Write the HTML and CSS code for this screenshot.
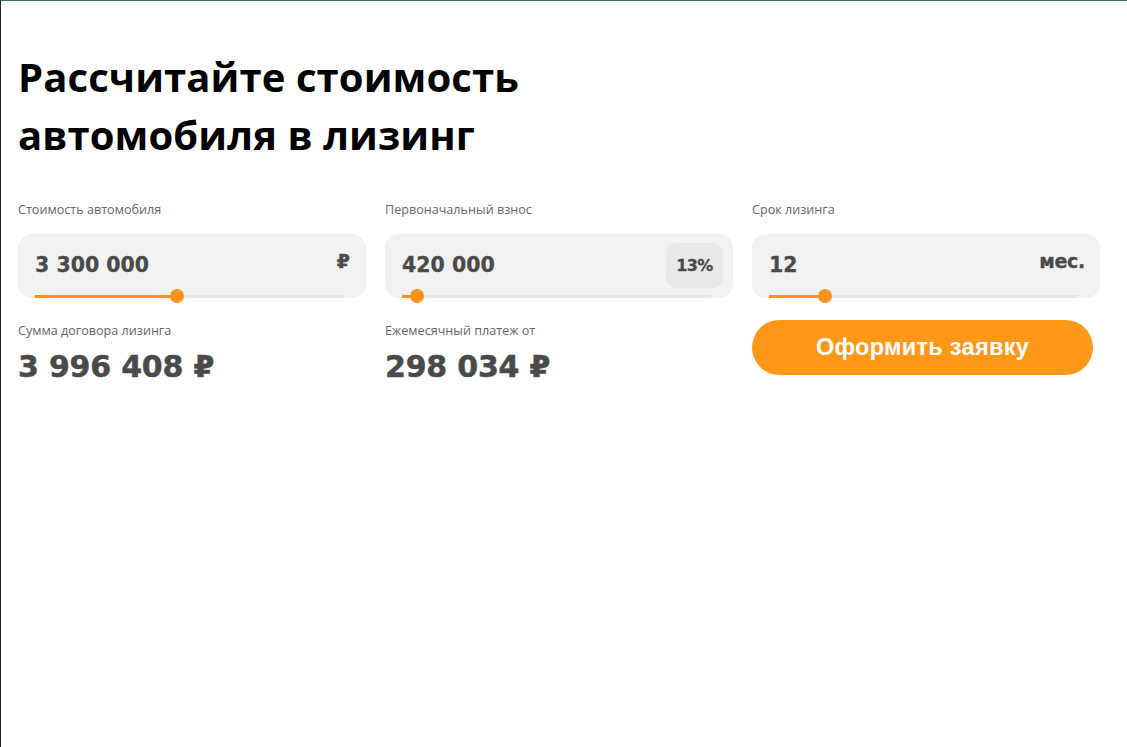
FILE: index.html
```html
<!DOCTYPE html>
<html lang="ru">
<head>
<meta charset="utf-8">
<title>Лизинг</title>
<link rel="stylesheet" href="styles.css">
</head>
<body>
<main class="calc">
  <h1 class="title">Рассчитайте стоимость<br>автомобиля в лизинг</h1>
  <div class="grid">
    <div class="field">
      <div class="label">Стоимость автомобиля</div>
      <div class="box">
        <span class="value">3 300 000</span>
        <span class="unit">₽</span>
        <div class="track"><div class="fill" style="width:46%"></div></div>
      </div>
    </div>
    <div class="field">
      <div class="label">Первоначальный взнос</div>
      <div class="box">
        <span class="value">420 000</span>
        <span class="badge">13%</span>
        <div class="track"><div class="fill" style="width:5%"></div></div>
      </div>
    </div>
    <div class="field">
      <div class="label">Срок лизинга</div>
      <div class="box">
        <span class="value">12</span>
        <span class="unit unit-text">мес.</span>
        <div class="track"><div class="fill" style="width:18%"></div></div>
      </div>
    </div>
    <div class="result">
      <div class="label">Сумма договора лизинга</div>
      <div class="big">3 996 408 ₽</div>
    </div>
    <div class="result">
      <div class="label">Ежемесячный платеж от</div>
      <div class="big">298 034 ₽</div>
    </div>
    <div class="action">
      <button class="btn" type="button">Оформить заявку</button>
    </div>
  </div>
</main>
</body>
</html>
```
FILE: styles.css
```css
html { background: #fff; }
body {
  margin: 0;
  min-height: 746px;
  border-top: 1px solid #3b6a6a;
  border-left: 1px solid #2a2030;
  font-family: "Open Sans", "Noto Sans", sans-serif;
  color: #4a4a4a;
}
.calc {
  padding: 47px 0 0 17px;
  width: 1082px;
}
.title {
  margin: 0 0 37px;
  font-family: "Open Sans", sans-serif;
  font-weight: 700;
  font-size: 40px;
  line-height: 58px;
  color: #000;
  letter-spacing: 0.1px;
}
.grid {
  display: grid;
  grid-template-columns: repeat(3, 348px);
  column-gap: 19px;
}
.label {
  font-size: 12.6px;
  color: #666;
  line-height: 18px;
}
.field .label { margin-bottom: 15px; }
.box {
  position: relative;
  height: 62px;
  background: #f2f2f2;
  border-radius: 14px;
  display: flex;
  align-items: center;
  justify-content: space-between;
  padding: 0 16px 2px 17px;
}
.value, .unit, .badge, .big {
  font-family: "DejaVu Sans", Verdana, sans-serif;
  font-weight: 700;
  color: #4a4a4a;
  -webkit-text-stroke: 0.3px #4a4a4a;
}
.value {
  font-size: 20.5px;
}
.unit {
  font-size: 19px;
  margin-top: -8px;
}
.unit-text { font-size: 19px; margin-right: -1px; letter-spacing: -0.3px; }
.badge {
  background: #e8e8e8;
  border-radius: 10px;
  width: 57px;
  height: 45px;
  display: flex;
  align-items: center;
  justify-content: center;
  font-size: 16px;
  margin-right: -6px;
  letter-spacing: -0.6px;
}
.track {
  position: absolute;
  left: 17px;
  right: 22px;
  bottom: 0;
  height: 3px;
  background: #e6e6e6;
}
.fill {
  position: relative;
  height: 3px;
  background: #f7931e;
}
.fill::after {
  content: "";
  position: absolute;
  right: -7px;
  top: -6px;
  width: 14px;
  height: 14px;
  border-radius: 50%;
  background: #f7931e;
}
.result { padding-top: 24px; }
.big {
  font-size: 30px;
  line-height: 40px;
  margin-top: 7px;
  letter-spacing: -0.2px;
  -webkit-text-stroke: 0.5px #4a4a4a;
}
.action { padding-top: 22px; }
.btn {
  display: block;
  width: 341px;
  height: 55px;
  border: none;
  border-radius: 28px;
  background: #ff9819;
  color: #fff;
  font-family: "Liberation Sans", Arial, sans-serif;
  font-weight: 700;
  font-size: 23.5px;
  letter-spacing: 0.3px;
  cursor: pointer;
}
```
